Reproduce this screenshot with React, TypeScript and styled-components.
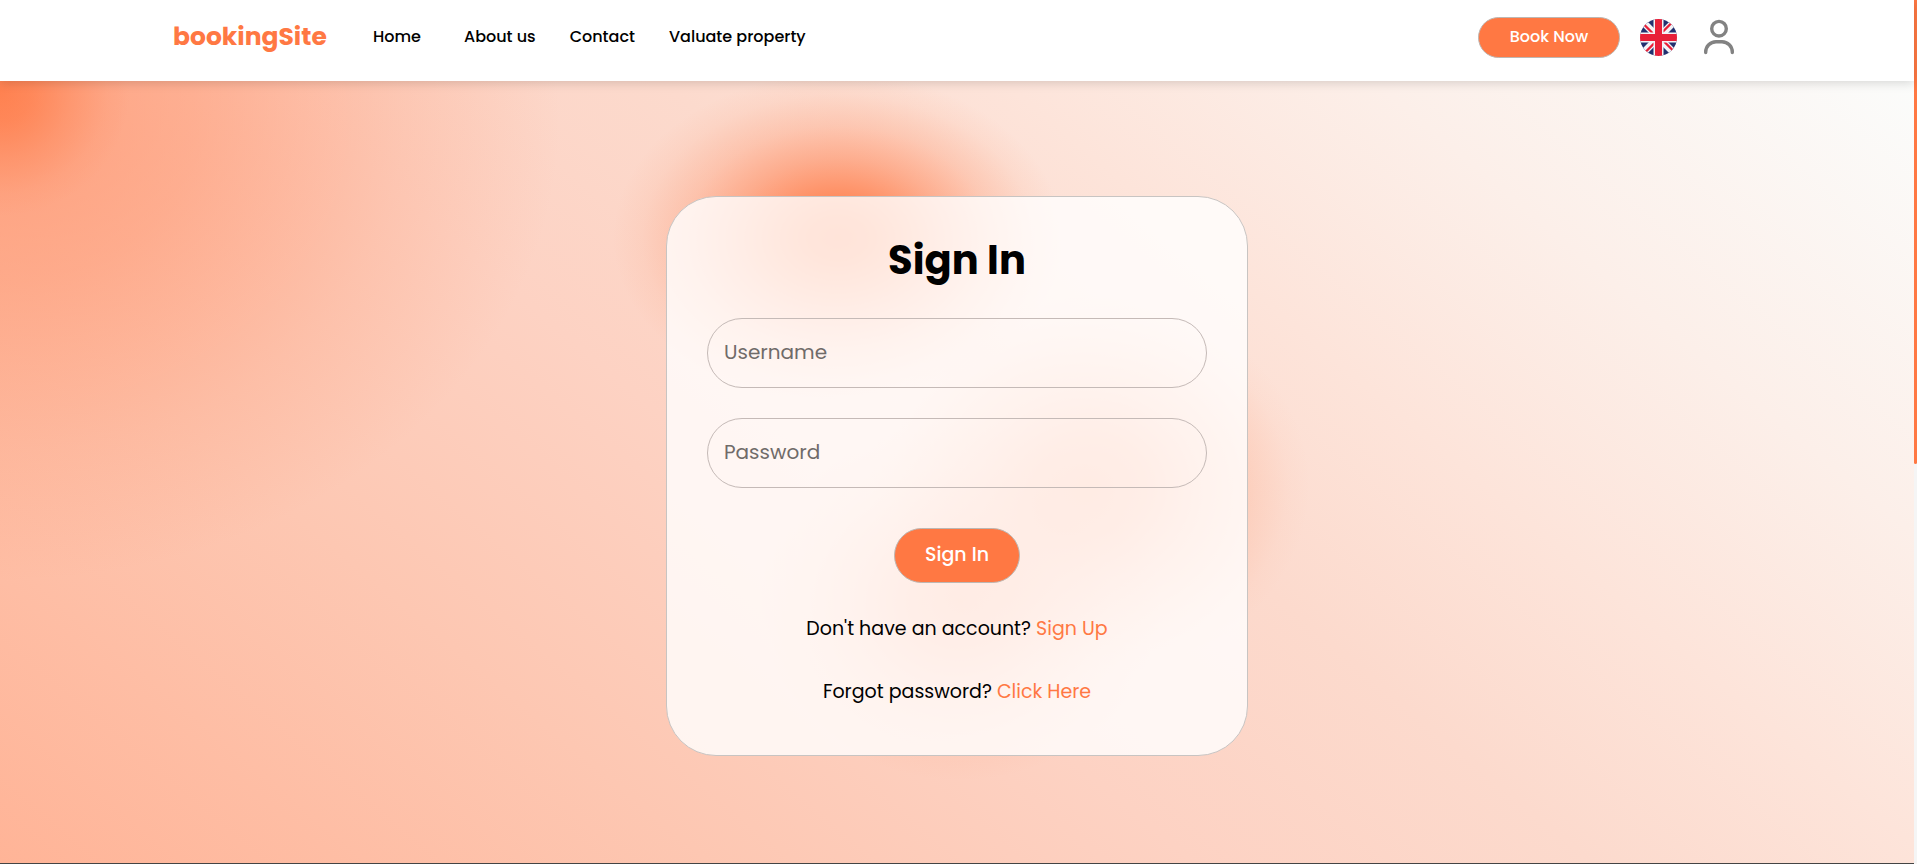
import React from "react";
import styled, { createGlobalStyle } from "styled-components";

const GlobalStyle = createGlobalStyle`
  *, *::before, *::after { box-sizing: border-box; }
  body { margin: 0; color: #000; font-family: Poppins, Inter, sans-serif; }
  a { text-decoration: none; }
`;

const Page = styled.div`
  display: grid;
  grid-template-columns: minmax(0, 1fr) 3px;
  min-height: 100vh;
`;

const Content = styled.div`
  display: flex;
  flex-direction: column;
`;

const ScrollTrack = styled.div`
  background: #f5f5f5;
`;

const ScrollThumb = styled.div`
  height: 464px;
  border-radius: 0 0 3px 3px;
  background: #ff7843;
`;

const Header = styled.header`
  position: relative;
  z-index: 1;
  display: flex;
  align-items: flex-start;
  justify-content: space-between;
  height: 81px;
  padding: 17px 180px 0 173px;
  background: #fff;
  box-shadow: 0 2px 10px rgba(0, 0, 0, 0.15);
`;

const HeaderGroup = styled.div<{ $gap: number }>`
  display: flex;
  align-items: center;
  gap: ${(p) => p.$gap}px;
  height: 41px;
`;

const Logo = styled.a`
  width: 153px;
  padding-bottom: 2px;
  color: #ff7843;
  font-size: 25px;
  font-weight: 700;
  line-height: 40px;
  white-space: nowrap;
`;

const Nav = styled.nav`
  display: flex;
  gap: 34px;
  padding-bottom: 2px;
`;

const NavLink = styled.a<{ $width?: number }>`
  min-width: ${(p) => p.$width ?? 0}px;
  color: #000;
  font-size: 16px;
  font-weight: 500;
  line-height: 24px;
  white-space: nowrap;
`;

const Button = styled.button<{ $large?: boolean }>`
  width: ${(p) => (p.$large ? 126 : 142)}px;
  height: ${(p) => (p.$large ? 55 : 41)}px;
  padding: 0 0 2px;
  border: 1px solid #bdb7b3;
  border-radius: 30px;
  background: #ff7843;
  color: #fff;
  font-family: inherit;
  font-size: ${(p) => (p.$large ? 19 : 16)}px;
  font-weight: 500;
  cursor: pointer;
`;

const IconButton = styled.button`
  display: flex;
  padding: 0;
  border: 0;
  background: none;
  cursor: pointer;
`;

const Main = styled.main`
  flex: 1;
  display: flex;
  flex-direction: column;
  align-items: center;
  padding: 115px 24px 107px;
  background:
    radial-gradient(ellipse 130px 125px at 0 10px, rgba(255, 118, 64, 0.75), rgba(255, 118, 64, 0.6) 25%, rgba(255, 118, 64, 0.3) 55%, rgba(255, 118, 64, 0.08) 82%, transparent),
    radial-gradient(ellipse 225px 165px at 838px 157px, #ff7843, rgba(255, 120, 67, 0.92) 14%, rgba(255, 120, 67, 0.74) 28%, rgba(255, 122, 71, 0.48) 48%, rgba(255, 125, 75, 0.24) 68%, rgba(255, 130, 80, 0.07) 87%, transparent),
    radial-gradient(ellipse 220px 190px at 1090px 405px, rgba(255, 120, 67, 0.6), rgba(255, 120, 67, 0.5) 25%, rgba(255, 125, 75, 0.3) 50%, rgba(255, 130, 80, 0.12) 75%, rgba(255, 135, 90, 0.03) 90%, transparent),
    radial-gradient(ellipse 200px 180px at 960px 520px, rgba(255, 120, 67, 0.55), rgba(255, 120, 67, 0.43) 25%, rgba(255, 125, 75, 0.24) 50%, rgba(255, 130, 80, 0.08) 75%, transparent),
    radial-gradient(ellipse 560px 460px at 0 40px, rgba(255, 130, 84, 0.58), rgba(255, 133, 88, 0.44) 35%, rgba(255, 138, 95, 0.18) 72%, transparent),
    linear-gradient(40deg, #ffb497, #fdc7b2 25%, #fdd2c3 42%, #fcdacd 56%, #fde4da 68%, #fcefe9 81%, #fbfcfb);
`;

const Card = styled.form`
  display: flex;
  flex-direction: column;
  align-items: center;
  width: 100%;
  max-width: 582px;
  min-height: 560px;
  padding: 33px 40px 47px;
  border: 1px solid #c8c4c2;
  border-radius: 50px;
  background: rgba(255, 255, 255, 0.8);
`;

const Title = styled.h1`
  margin: 0 0 28px;
  font-size: 40px;
  font-weight: 700;
  line-height: 60px;
`;

const Field = styled.input`
  width: 100%;
  height: 70px;
  margin-bottom: 30px;
  padding: 0 16px 2px;
  border: 1px solid #c5bab7;
  border-radius: 35px;
  outline: 0;
  background: transparent;
  color: #000;
  font-family: inherit;
  font-size: 20px;
  &::placeholder { color: #706b69; opacity: 1; }
`;

const Actions = styled.div`
  margin: 10px 0 31px;
`;

const Note = styled.p`
  margin: 0 0 33px;
  font-size: 19px;
  line-height: 30px;
  &:last-child { margin-bottom: 0; }
`;

const NoteLink = styled.a`
  color: #ff7843;
`;

const FooterEdge = styled.footer`
  height: 1px;
  background: #444;
`;

const FlagIcon = () => (
  <svg width="37" height="37" viewBox="0 0 37 37" aria-hidden="true">
    <clipPath id="flag-round"><circle cx="18.5" cy="18.5" r="18.5" /></clipPath>
    <g clipPath="url(#flag-round)">
      <rect width="37" height="37" fill="#22306f" />
      <path d="M0 0L37 37M37 0L0 37" stroke="#f3f3f6" strokeWidth="7" />
      <path d="M4 5.5L17 18.5M33 31.5L20 18.5M31.500 4L18 17.500M5.500 33L18 20.500" stroke="#e81f38" strokeWidth="2.3" />
      <path d="M18.500 0V37M0 18.500H37" stroke="#f3f3f6" strokeWidth="10" />
      <path d="M18.500 0V37M0 18.500H37" stroke="#e81f38" strokeWidth="7" />
    </g>
  </svg>
);

const UserIcon = () => (
  <svg width="30" height="38" viewBox="0 0 30 38" fill="none" stroke="#828282" strokeWidth="3.4" strokeLinecap="round" aria-hidden="true">
    <circle cx="15" cy="9.7" r="7.3" />
    <path d="M1.700 33.600V33A10.300 10.300 0 0 1 12 22.700H18A10.300 10.300 0 0 1 28.300 33V33.600" />
  </svg>
);

export default function App() {
  return (
    <Page>
      <GlobalStyle />
      <Content>
        <Header>
          <HeaderGroup $gap={47}>
            <Logo href="#">bookingSite</Logo>
            <Nav>
              <NavLink href="#home" $width={57}>Home</NavLink>
              <NavLink href="#about">About us</NavLink>
              <NavLink href="#contact">Contact</NavLink>
              <NavLink href="#valuate">Valuate property</NavLink>
            </Nav>
          </HeaderGroup>
          <HeaderGroup $gap={20}>
            <Button type="button">Book Now</Button>
            <HeaderGroup $gap={27}>
              <IconButton type="button" aria-label="Language"><FlagIcon /></IconButton>
              <IconButton type="button" aria-label="Account"><UserIcon /></IconButton>
            </HeaderGroup>
          </HeaderGroup>
        </Header>
        <Main>
          <Card onSubmit={(e) => e.preventDefault()}>
            <Title>Sign In</Title>
            <Field type="text" name="username" placeholder="Username" aria-label="Username" />
            <Field type="password" name="password" placeholder="Password" aria-label="Password" />
            <Actions><Button type="submit" $large>Sign In</Button></Actions>
            <Note>Don't have an account? <NoteLink href="#signup">Sign Up</NoteLink></Note>
            <Note>Forgot password? <NoteLink href="#reset">Click Here</NoteLink></Note>
          </Card>
        </Main>
        <FooterEdge />
      </Content>
      <ScrollTrack><ScrollThumb /></ScrollTrack>
    </Page>
  );
}
